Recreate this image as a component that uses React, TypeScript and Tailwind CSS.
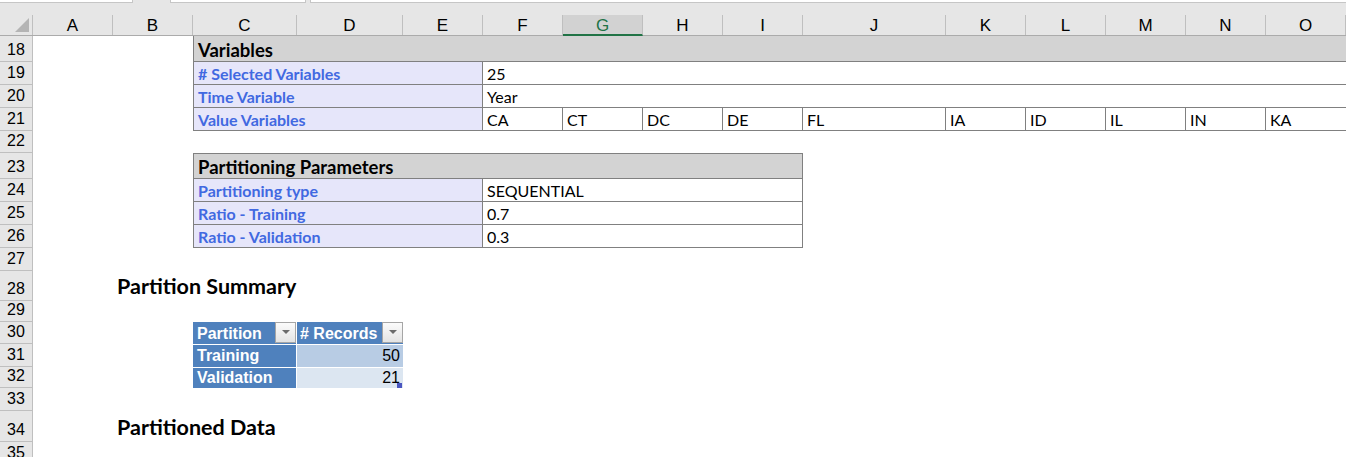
import type { ReactNode } from "react";

const COLS =
  "grid grid-cols-[33px_80px_80px_104px_106px_80px_80px_80px_80px_80px_143px_80px_80px_80px_80px_80px]";

const LETTERS = ["A", "B", "C", "D", "E", "F", "G", "H", "I", "J", "K", "L", "M", "N", "O"];

const calibri = "font-['Lato','Open_Sans',sans-serif]";
const arial = "font-['Liberation_Sans',Arial,sans-serif]";

function Row({ n, h, children }: { n: number; h: string; children?: ReactNode }) {
  return (
    <div className={`${COLS} ${h}`}>
      <div
        className={`flex items-end justify-center pb-[3px] bg-[#e6e6e6] border-r border-b border-[#bfbfbf] text-[16px] leading-none text-black ${arial}`}
      >
        {n}
      </div>
      {children}
    </div>
  );
}

function Label({ text, span = "col-start-4 col-span-3" }: { text: string; span?: string }) {
  return (
    <div
      className={`${span} flex items-end pl-[4px] pb-[2px] bg-[#e6e6fa] border-l border-r border-b border-[#808080] text-[16px] font-bold leading-none text-[#4169e1] whitespace-nowrap`}
    >
      {text}
    </div>
  );
}

function FilterButton() {
  return (
    <div className="absolute right-0 top-0 w-[21px] h-[21px] flex items-center justify-center border border-[#a6a6a6] bg-gradient-to-b from-[#fbfbfb] to-[#e4e4e4]">
      <svg width="8" height="5" viewBox="0 0 8 5">
        <path d="M0 0 L8 0 L4 4 Z" fill="#6b6b6b" />
      </svg>
    </div>
  );
}

export default function App() {
  const values = ["CA", "CT", "DC", "DE", "FL", "IA", "ID", "IL", "IN", "KA"];

  return (
    <div className={`w-[1346px] h-[457px] overflow-hidden bg-white ${calibri}`}>
      {/* ribbon leftovers */}
      <div className="h-[15px] bg-[#e6e6e6] flex">
        <div className="w-[133px] h-[3px] bg-white border-r border-b border-[#c6c6c6]" />
        <div className="ml-[37px] w-[136px] h-[3px] bg-white border-l border-r border-b border-[#c6c6c6]" />
        <div className="ml-[4px] flex-1 h-[3px] bg-white border-l border-b border-[#c6c6c6]" />
      </div>

      {/* column headers */}
      <div className={`${COLS} h-[21px] bg-[#e6e6e6] border-b border-[#ababab] ${arial}`}>
        <div className="relative border-r border-[#bfbfbf]">
          <svg className="absolute right-[3px] bottom-[3px]" width="14" height="14" viewBox="0 0 14 14">
            <path d="M14 0 L14 14 L0 14 Z" fill="#b4b4b4" />
          </svg>
        </div>
        {LETTERS.map((l) =>
          l === "G" ? (
            <div
              key={l}
              className="flex items-center justify-center pt-[1px] bg-[#d2d2d2] border-r border-[#bfbfbf] border-b-2 border-b-[#217346] text-[17px] leading-none text-[#217346] -mb-px"
            >
              {l}
            </div>
          ) : (
            <div
              key={l}
              className="flex items-center justify-center pt-[1px] border-r border-[#bfbfbf] text-[17px] leading-none text-black"
            >
              {l}
            </div>
          )
        )}
      </div>

      {/* Variables */}
      <Row n={18} h="h-[26px]">
        <div className="col-start-4 col-span-13 flex items-end pl-[4px] pb-[2px] bg-[#d3d3d3] border-l border-b border-[#808080] text-[18.5px] font-bold leading-none text-black">
          Variables
        </div>
      </Row>
      <Row n={19} h="h-[23px]">
        <Label text="# Selected Variables" />
        <div className="col-span-10 flex items-end pl-[4px] pb-[2px] border-b border-[#808080] text-[16px] leading-none text-black">
          25
        </div>
      </Row>
      <Row n={20} h="h-[23px]">
        <Label text="Time Variable" />
        <div className="col-span-10 flex items-end pl-[4px] pb-[2px] border-b border-[#808080] text-[16px] leading-none text-black">
          Year
        </div>
      </Row>
      <Row n={21} h="h-[23px]">
        <Label text="Value Variables" />
        {values.map((v, i) => (
          <div
            key={v}
            className={`flex items-end pl-[4px] pb-[2px] border-b border-[#808080] text-[16px] leading-none text-black ${
              i < values.length - 1 ? "border-r" : ""
            }`}
          >
            {v}
          </div>
        ))}
      </Row>
      <Row n={22} h="h-[22px]" />

      {/* Partitioning Parameters */}
      <Row n={23} h="h-[26px]">
        <div className="col-start-4 col-span-7 flex items-end pl-[4px] pb-[2px] bg-[#d3d3d3] border border-[#808080] text-[18.5px] font-bold leading-none text-black">
          Partitioning Parameters
        </div>
      </Row>
      {[
        ["Partitioning type", "SEQUENTIAL"],
        ["Ratio - Training", "0.7"],
        ["Ratio - Validation", "0.3"],
      ].map(([k, v], i) => (
        <Row key={k} n={24 + i} h="h-[23px]">
          <Label text={k} />
          <div className="col-span-4 flex items-end pl-[4px] pb-[2px] border-r border-b border-[#808080] text-[16px] leading-none text-black">
            {v}
          </div>
        </Row>
      ))}
      <Row n={27} h="h-[23px]" />

      <Row n={28} h="h-[30px]">
        <div className="col-start-3 flex items-end pl-[4px] pb-[4px] text-[21.5px] font-bold leading-none text-black whitespace-nowrap">
          Partition Summary
        </div>
      </Row>
      <Row n={29} h="h-[21px]" />

      {/* pivot table */}
      <Row n={30} h="h-[22px]">
        <div
          className={`col-start-4 relative flex items-end pl-[4px] pb-[2px] bg-[#4f81bd] border-r border-white text-[16px] font-bold leading-none text-white ${arial}`}
        >
          Partition
          <FilterButton />
        </div>
        <div
          className={`relative flex items-end pl-[3px] pb-[2px] bg-[#4f81bd] text-[16px] font-bold leading-none text-white whitespace-nowrap overflow-hidden ${arial}`}
        >
          # Records
          <FilterButton />
        </div>
      </Row>
      <Row n={31} h="h-[23px]">
        <div
          className={`col-start-4 flex items-end pl-[4px] pb-[3px] bg-[#4f81bd] border-t border-r border-white text-[16px] font-bold leading-none text-white ${arial}`}
        >
          Training
        </div>
        <div
          className={`flex items-end justify-end pr-[3px] pb-[3px] bg-[#b8cce4] border-t border-white text-[16px] leading-none text-black ${arial}`}
        >
          50
        </div>
      </Row>
      <Row n={32} h="h-[21px]">
        <div
          className={`col-start-4 flex items-end pl-[4px] pb-[2px] bg-[#4f81bd] border-t border-r border-white text-[16px] font-bold leading-none text-white ${arial}`}
        >
          Validation
        </div>
        <div
          className={`relative flex items-end justify-end pr-[3px] pb-[2px] bg-[#dce6f1] border-t border-white text-[16px] leading-none text-black ${arial}`}
        >
          21
          <div className="absolute right-[1px] bottom-0 w-[5px] h-[5px] bg-[#4a56c0]" />
        </div>
      </Row>
      <Row n={33} h="h-[23px]" />

      <Row n={34} h="h-[31px]">
        <div className="col-start-3 flex items-end pl-[4px] pb-[4px] text-[21.5px] font-bold leading-none text-black whitespace-nowrap">
          Partitioned Data
        </div>
      </Row>
      <Row n={35} h="h-[23px]" />
    </div>
  );
}
